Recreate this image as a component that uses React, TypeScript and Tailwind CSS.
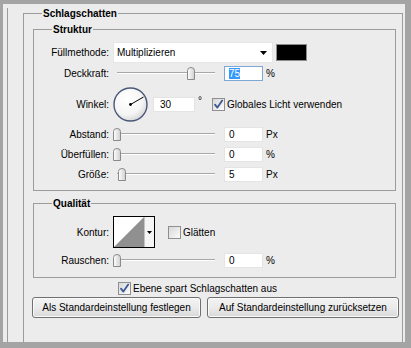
import type { ReactNode } from "react";

// Photoshop "Schlagschatten" layer style panel

const GroupBox = ({ title, className, children }: { title: string; className?: string; children: ReactNode }) => (
  <fieldset className={`border border-[#9c9c9c] ${className ?? ""}`}>
    <legend className="ml-[18px] px-[1px] font-bold leading-[13px]">{title}</legend>
    {children}
  </fieldset>
);

const Row = ({ label, className, children }: { label: string; className?: string; children: ReactNode }) => (
  <div className={`flex items-center ${className ?? ""}`}>
    <span className="w-[76px] text-right pr-[1px] leading-[13px]">{label}</span>
    <div className="ml-[3px] flex items-center">{children}</div>
  </div>
);

const Check = ({ checked }: { checked?: boolean }) => (
  <div className="w-[13px] h-[13px] shrink-0 border border-[#8e8f8f] bg-linear-to-br from-[#d8d8d8] to-[#fbfbfb] flex items-center justify-center">
    {checked && (
      <svg width="11" height="11" viewBox="0 0 11 11">
        <path d="M2 5.6 L4.4 8.6 L9.2 1.6" fill="none" stroke="#3b5796" strokeWidth="1.8" strokeLinecap="round" strokeLinejoin="round" />
      </svg>
    )}
  </div>
);

const Slider = ({ pos }: { pos: number }) => (
  <div className="relative w-[106px] h-[14px] flex items-center px-[4px]">
    <div className="w-full h-[2px] border-t border-[#a8a8a8] bg-white" />
    <svg className="absolute top-[1px]" style={{ left: Math.round(pos * 98) }} width="8" height="13" viewBox="0 0 8 13">
      <defs>
        <linearGradient id="thumb" x1="0" y1="0" x2="1" y2="0">
          <stop offset="0" stopColor="#ffffff" />
          <stop offset="1" stopColor="#cfcfcf" />
        </linearGradient>
      </defs>
      <path d="M0.5 12.5 V3.5 Q0.5 0.5 4 0.5 Q7.5 0.5 7.5 3.5 V12.5 Z" fill="url(#thumb)" stroke="#8a8a8a" />
    </svg>
  </div>
);

const NumField = ({ value, unit, focused }: { value: string; unit: string; focused?: boolean }) => (
  <>
    <div
      className={`ml-[5px] w-[39px] h-[15px] bg-white border pl-[4px] leading-[13px] ${
        focused ? "border-[#7ea6d6]" : "border-[#e4e4e4]"
      }`}
    >
      {focused ? <span className="bg-[#3399ff] text-white">{value}</span> : value}
    </div>
    <span className="ml-[3px] leading-[13px]">{unit}</span>
  </>
);

const Button = ({ children, className }: { children: ReactNode; className?: string }) => (
  <button
    type="button"
    className={`h-[21px] rounded-[3px] border border-[#707070] bg-linear-to-b from-[#f3f3f3] via-[#ebebeb] to-[#d8d8d8] shadow-[inset_0_0_0_1px_#fafafa] flex items-center justify-center ${className ?? ""}`}
  >
    {children}
  </button>
);

export default function App() {
  return (
    <div className="w-[411px] h-[348px] border-t-[4px] border-l-[3px] border-r-[6px] border-b-[6px] border-[#a4a4a4] bg-[#ececec] font-['Liberation_Sans',Arial,sans-serif] text-[10px] text-black">
      <div className="flex h-full pl-[4px]">
        <div className="w-px mt-[4px] bg-[#9a9a9a]" />

        <GroupBox title="Schlagschatten" className="ml-[15px] mt-[3px] w-[380px] border-b-0">
          {/* Struktur */}
          <GroupBox title="Struktur" className="ml-[9px] mt-[3px] w-[363px]">
            <div className="flex flex-col pb-[6px]">
              <Row label="Füllmethode:" className="mt-[6px] h-[21px]">
                <div className="w-[160px] h-[21px] bg-white border border-[#e6e6e6] flex items-center justify-between pl-[3px] pr-[5px]">
                  <span>Multiplizieren</span>
                  <svg width="7" height="4" viewBox="0 0 7 4">
                    <path d="M0 0 H7 L3.5 4 Z" fill="#000" />
                  </svg>
                </div>
                <div className="ml-[3px] w-[31px] h-[17px] bg-black border border-[#8c8c8c]" />
              </Row>

              <Row label="Deckkraft:" className="mt-[1px] h-[18px]">
                <Slider pos={0.75} />
                <NumField value="75" unit="%" focused />
              </Row>

              <Row label="Winkel:" className="mt-[5px] h-[35px]">
                <svg width="35" height="35" viewBox="0 0 35 35">
                  <defs>
                    <radialGradient id="dial" cx="40%" cy="35%" r="70%">
                      <stop offset="0" stopColor="#ffffff" />
                      <stop offset="0.65" stopColor="#f5f5f5" />
                      <stop offset="1" stopColor="#d4d4d4" />
                    </radialGradient>
                  </defs>
                  <circle cx="17.5" cy="17.5" r="16.5" fill="url(#dial)" stroke="#4a5878" strokeWidth="1.4" />
                  <line x1="17.5" y1="17.5" x2="30.5" y2="10" stroke="#000" strokeWidth="1" />
                  <circle cx="17.5" cy="17.5" r="1.4" fill="#000" />
                </svg>
                <div className="ml-[5px] w-[42px] h-[15px] bg-white border border-[#e4e4e4] pl-[6px] leading-[13px]">30</div>
                <span className="ml-[3px] w-[14px] self-start mt-[9px] leading-[10px]">°</span>
                <Check checked />
                <span className="ml-[2px] leading-[13px]">Globales Licht verwenden</span>
              </Row>

              <Row label="Abstand:" className="mt-[2px] h-[20px]">
                <Slider pos={0} />
                <NumField value="0" unit="Px" />
              </Row>
              <Row label="Überfüllen:" className="h-[20px]">
                <Slider pos={0} />
                <NumField value="0" unit="%" />
              </Row>
              <Row label="Größe:" className="h-[20px]">
                <Slider pos={0.05} />
                <NumField value="5" unit="Px" />
              </Row>
            </div>
          </GroupBox>

          {/* Qualität */}
          <GroupBox title="Qualität" className="ml-[9px] mt-[6px] w-[363px]">
            <div className="flex flex-col pb-[7px]">
              <Row label="Kontur:" className="mt-[6px] h-[32px]">
                <div className="flex w-[42px] h-[32px] border border-black bg-white">
                  <svg width="30" height="30" viewBox="0 0 30 30">
                    <path d="M0 30 L30 0 L30 30 Z" fill="#909090" />
                  </svg>
                  <div className="w-[10px] border-l border-[#c4c4c4] bg-[#f5f5f5] flex items-center justify-center">
                    <svg width="5" height="3" viewBox="0 0 5 3">
                      <path d="M0 0 H5 L2.5 3 Z" fill="#000" />
                    </svg>
                  </div>
                </div>
                <div className="ml-[13px] flex items-center">
                  <Check />
                  <span className="ml-[2px] leading-[13px]">Glätten</span>
                </div>
              </Row>
              <Row label="Rauschen:" className="mt-[2px] h-[20px]">
                <Slider pos={0} />
                <NumField value="0" unit="%" />
              </Row>
            </div>
          </GroupBox>

          <div className="ml-[94px] mt-[3px] h-[14px] flex items-center">
            <Check checked />
            <span className="ml-[2px] leading-[13px]">Ebene spart Schlagschatten aus</span>
          </div>

          <div className="ml-[8px] mt-[2px] flex">
            <Button className="w-[169px]">Als Standardeinstellung festlegen</Button>
            <Button className="ml-[6px] w-[192px]">Auf Standardeinstellung zurücksetzen</Button>
          </div>
        </GroupBox>
      </div>
    </div>
  );
}
